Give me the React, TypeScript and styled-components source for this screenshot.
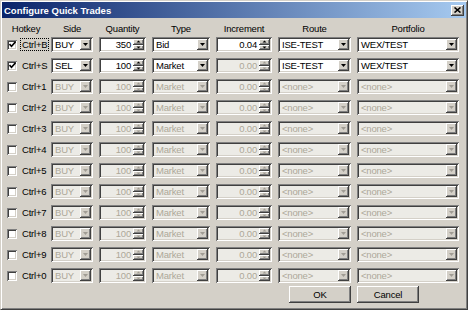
import styled, { createGlobalStyle } from "styled-components";

const COLUMNS = "38px 42px 47px 58px 56px 73px 102px";

interface Trade {
  hotkey: string;
  checked: boolean;
  enabled: boolean;
  incrementEnabled: boolean;
  focused?: boolean;
  side: string;
  quantity: string;
  type: string;
  increment: string;
  route: string;
  portfolio: string;
}

const blank = (hotkey: string): Trade => ({
  hotkey,
  checked: false,
  enabled: false,
  incrementEnabled: false,
  side: "BUY",
  quantity: "100",
  type: "Market",
  increment: "0.00",
  route: "<none>",
  portfolio: "<none>",
});

const trades: Trade[] = [
  {
    hotkey: "Ctrl+B",
    checked: true,
    enabled: true,
    incrementEnabled: true,
    focused: true,
    side: "BUY",
    quantity: "350",
    type: "Bid",
    increment: "0.04",
    route: "ISE-TEST",
    portfolio: "WEX/TEST",
  },
  {
    hotkey: "Ctrl+S",
    checked: true,
    enabled: true,
    incrementEnabled: false,
    side: "SEL",
    quantity: "100",
    type: "Market",
    increment: "0.00",
    route: "ISE-TEST",
    portfolio: "WEX/TEST",
  },
  ...["1", "2", "3", "4", "5", "6", "7", "8", "9", "0"].map((n) => blank(`Ctrl+${n}`)),
];

const GlobalStyle = createGlobalStyle`
  body {
    margin: 0;
    background: #d4d0c8;
  }
`;

const DownArrow = ({ disabled }: { disabled?: boolean }) => (
  <svg width="5" height="3" viewBox="0 0 5 3">
    <polygon points="0,0 5,0 2.5,3" fill={disabled ? "#a09c94" : "#000"} />
  </svg>
);

const SpinArrow = ({ up, disabled }: { up?: boolean; disabled?: boolean }) => (
  <svg width="5" height="3" viewBox="0 0 5 3">
    <polygon
      points={up ? "0.5,2.5 4.5,2.5 2.5,0.5" : "0.5,0.5 4.5,0.5 2.5,2.5"}
      fill={disabled ? "#a09c94" : "#000"}
    />
  </svg>
);

const Select = ({ value, disabled }: { value: string; disabled?: boolean }) => (
  <Field $disabled={disabled}>
    <FieldText>{value}</FieldText>
    <DropButton>
      <DownArrow disabled={disabled} />
    </DropButton>
  </Field>
);

const Spinner = ({ value, disabled }: { value: string; disabled?: boolean }) => (
  <Field $disabled={disabled}>
    <FieldText $right>{value}</FieldText>
    <SpinColumn>
      <SpinButton>
        <SpinArrow up disabled={disabled} />
      </SpinButton>
      <SpinButton>
        <SpinArrow disabled={disabled} />
      </SpinButton>
    </SpinColumn>
  </Field>
);

export default function App() {
  return (
    <>
      <GlobalStyle />
      <Window>
        <TitleBar>
          <Title>Configure Quick Trades</Title>
          <CloseButton>
            <svg width="7" height="6" viewBox="0 0 7 6">
              <path d="M0.5 0.5 L6.5 5.5 M6.5 0.5 L0.5 5.5" stroke="#000" strokeWidth="1.6" />
            </svg>
          </CloseButton>
        </TitleBar>
        <Content>
          <HeaderRow>
            <span>Hotkey</span>
            <span>Side</span>
            <span>Quantity</span>
            <span>Type</span>
            <span>Increment</span>
            <span>Route</span>
            <span>Portfolio</span>
          </HeaderRow>
          <Rows>
            {trades.map((t) => (
              <Row key={t.hotkey}>
                <Hotkey>
                  <Checkbox>
                    {t.checked && (
                      <svg width="7" height="7" viewBox="0 0 7 7">
                        <path d="M0.5 3 L2.5 5.2 L6.5 0.8" stroke="#000" strokeWidth="1.6" fill="none" />
                      </svg>
                    )}
                  </Checkbox>
                  <HotkeyLabel $focused={t.focused}>{t.hotkey}</HotkeyLabel>
                </Hotkey>
                <Select value={t.side} disabled={!t.enabled} />
                <Spinner value={t.quantity} disabled={!t.enabled} />
                <Select value={t.type} disabled={!t.enabled} />
                <Spinner value={t.increment} disabled={!t.incrementEnabled} />
                <Select value={t.route} disabled={!t.enabled} />
                <Select value={t.portfolio} disabled={!t.enabled} />
              </Row>
            ))}
          </Rows>
          <Footer>
            <PushButton>OK</PushButton>
            <PushButton>Cancel</PushButton>
          </Footer>
        </Content>
      </Window>
    </>
  );
}

const Window = styled.div`
  width: 468px;
  height: 310px;
  box-sizing: border-box;
  padding: 1px;
  background: #d4d0c8;
  border: 1px solid;
  border-color: #d4d0c8 #404040 #404040 #d4d0c8;
  box-shadow: inset 1px 1px #fff, inset -1px -1px #808080;
  display: flex;
  flex-direction: column;
  font-family: "Liberation Sans", Arial, sans-serif;
  font-size: 9.5px;
  letter-spacing: -0.2px;
  color: #000;
`;

const TitleBar = styled.div`
  height: 16px;
  flex-shrink: 0;
  display: flex;
  align-items: center;
  justify-content: space-between;
  padding: 0 2px 0 2px;
  background: linear-gradient(to right, #0a246a, #a6caf0);
`;

const Title = styled.span`
  color: #fff;
  font-weight: bold;
  font-size: 9.5px;
  letter-spacing: 0;
`;

const CloseButton = styled.div`
  width: 13px;
  height: 11px;
  box-sizing: border-box;
  background: #d4d0c8;
  box-shadow: inset -1px -1px #404040, inset 1px 1px #fff, inset -2px -2px #808080;
  display: flex;
  align-items: center;
  justify-content: center;
`;

const Content = styled.div`
  flex: 1;
  padding: 4px 5px 0 5px;
  display: flex;
  flex-direction: column;
`;

const HeaderRow = styled.div`
  display: grid;
  grid-template-columns: ${COLUMNS};
  column-gap: 6px;
  height: 13px;
  margin-bottom: 2px;
  align-items: center;
  text-align: center;
  white-space: nowrap;
`;

const Rows = styled.div`
  display: flex;
  flex-direction: column;
  gap: 6px;
`;

const Row = styled.div`
  display: grid;
  grid-template-columns: ${COLUMNS};
  column-gap: 6px;
  height: 15px;
`;

const Hotkey = styled.div`
  display: flex;
  align-items: center;
  gap: 3px;
  white-space: nowrap;
`;

const Checkbox = styled.div`
  width: 10px;
  height: 10px;
  flex-shrink: 0;
  box-sizing: border-box;
  background: #fff;
  box-shadow: inset 1px 1px #808080, inset -1px -1px #fff, inset 2px 2px #404040, inset -2px -2px #d4d0c8;
  display: flex;
  align-items: center;
  justify-content: center;
`;

const HotkeyLabel = styled.span<{ $focused?: boolean }>`
  padding: 0 1px;
  line-height: 11px;
  border: 1px dotted ${(p) => (p.$focused ? "#000" : "transparent")};
`;

const Field = styled.div<{ $disabled?: boolean }>`
  height: 15px;
  box-sizing: border-box;
  padding: 2px;
  display: flex;
  background: ${(p) => (p.$disabled ? "#ecebe6" : "#fff")};
  color: ${(p) => (p.$disabled ? "#aca899" : "#000")};
  box-shadow: inset 1px 1px #808080, inset -1px -1px #fff, inset 2px 2px #404040, inset -2px -2px #d4d0c8;
`;

const FieldText = styled.span<{ $right?: boolean }>`
  flex: 1;
  min-width: 0;
  overflow: hidden;
  white-space: nowrap;
  line-height: 11px;
  padding: 0 2px;
  text-align: ${(p) => (p.$right ? "right" : "left")};
`;

const raised = `
  background: #d4d0c8;
  box-shadow: inset -1px -1px #404040, inset 1px 1px #fff, inset -2px -2px #808080;
`;

const DropButton = styled.div`
  width: 11px;
  flex-shrink: 0;
  ${raised}
  display: flex;
  align-items: center;
  justify-content: center;
`;

const SpinColumn = styled.div`
  width: 11px;
  flex-shrink: 0;
  display: flex;
  flex-direction: column;
`;

const SpinButton = styled.div`
  flex: 1;
  ${raised}
  display: flex;
  align-items: center;
  justify-content: center;
`;

const Footer = styled.div`
  display: flex;
  justify-content: flex-end;
  gap: 6px;
  margin-top: 3px;
  padding-right: 42px;
`;

const PushButton = styled.div`
  width: 62px;
  height: 17px;
  box-sizing: border-box;
  ${raised}
  display: flex;
  align-items: center;
  justify-content: center;
`;
